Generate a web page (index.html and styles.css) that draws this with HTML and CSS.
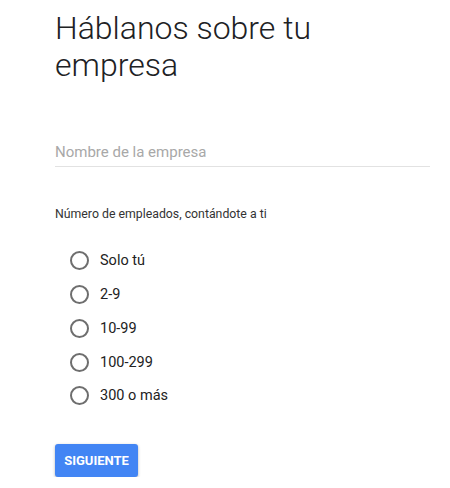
FILE: index.html
```html
<!DOCTYPE html>
<html lang="es">
<head>
<meta charset="utf-8">
<link rel="stylesheet" href="styles.css">
</head>
<body>
<main class="page">
  <h1 class="title">Háblanos sobre tu empresa</h1>
  <div class="field">
    <input class="field-input" type="text" placeholder="Nombre de la empresa">
  </div>
  <p class="label">Número de empleados, contándote a ti</p>
  <ul class="options">
    <li class="option"><span class="radio"></span><span class="option-text">Solo tú</span></li>
    <li class="option"><span class="radio"></span><span class="option-text">2-9</span></li>
    <li class="option"><span class="radio"></span><span class="option-text">10-99</span></li>
    <li class="option"><span class="radio"></span><span class="option-text">100-299</span></li>
    <li class="option"><span class="radio"></span><span class="option-text">300 o más</span></li>
  </ul>
  <button class="btn" type="button">SIGUIENTE</button>
</main>
</body>
</html>
```
FILE: styles.css
```css
* { box-sizing: border-box; }
html, body { margin: 0; padding: 0; background: #fff; }
body { font-family: Roboto, "Liberation Sans", Arial, sans-serif; color: #212121; }
.page { padding: 10px 20px 0 55px; width: 450px; }
.title {
  margin: 0;
  font-weight: 300;
  font-size: 32px;
  line-height: 37px;
  color: #202124;
  width: 300px;
}
.field { margin-top: 54px; width: 375px; border-bottom: 1px solid #e2e2e2; }
.field-input {
  border: 0; outline: 0; padding: 0; margin: 0;
  width: 100%; height: 28px;
  font-family: inherit; font-size: 15px; color: #333;
  background: transparent;
}
.field-input::placeholder { color: #a8a8a8; }
.label { margin: 38px 0 0; font-size: 12.3px; line-height: 18px; color: #333; }
.options { list-style: none; margin: 21px 0 0; padding: 0 0 0 15px; }
.option { display: flex; align-items: center; height: 33.75px; }
.radio {
  width: 19px; height: 19px; border-radius: 50%;
  border: 2px solid #6e6e6e; flex: none;
}
.option-text { margin-left: 11px; font-size: 14.5px; color: #222; }
.btn {
  margin-top: 31px;
  background: #4285f4; color: #fff; border: 0; border-radius: 3px;
  font-family: inherit; font-weight: 700; font-size: 13px;
  height: 33px; width: 83px; padding: 0;
  box-shadow: 0 1px 3px rgba(0,0,0,0.3);
}
```
